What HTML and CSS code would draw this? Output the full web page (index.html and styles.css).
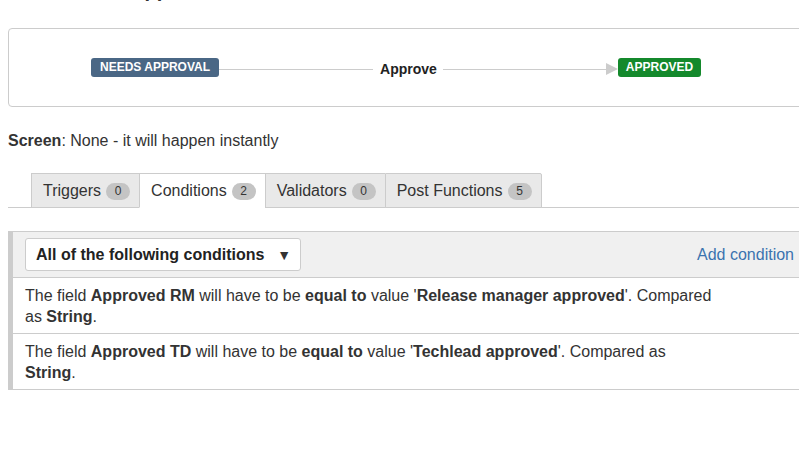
FILE: index.html
```html
<!DOCTYPE html>
<html lang="en">
<head>
  <meta charset="UTF-8">
  <meta name="viewport" content="width=device-width, initial-scale=1.0">
  <title>Transition: Approve</title>
  <link rel="stylesheet" href="styles.css">
</head>
<body>

  <main class="page">
    <h2 class="title">Transition: Approve</h2>

    <section class="diagram">
      <span class="lozenge lozenge-blue">Needs Approval</span>
      <span class="line line-left"></span>
      <span class="step-name">Approve</span>
      <span class="line line-right"></span>
      <span class="arrow"></span>
      <span class="lozenge lozenge-green">Approved</span>
    </section>

    <p class="screen"><b>Screen</b>: None - it will happen instantly</p>

    <nav class="tabs">
      <a class="tab">Triggers <span class="badge">0</span></a>
      <a class="tab active">Conditions <span class="badge">2</span></a>
      <a class="tab">Validators <span class="badge">0</span></a>
      <a class="tab last">Post Functions <span class="badge">5</span></a>
    </nav>

    <section class="conditions">
      <div class="conditions-header">
        <div class="select">
          <span>All of the following conditions</span>
          <span class="caret">&#9660;</span>
        </div>
        <a class="add-link">Add condition</a>
      </div>
      <div class="condition">
        <p>The field <b>Approved RM</b> will have to be <b>equal to</b> value '<b>Release manager approved</b>'. Compared as <b>String</b>.</p>
      </div>
      <div class="condition">
        <p>The field <b>Approved TD</b> will have to be <b>equal to</b> value '<b>Techlead approved</b>'. Compared as <b>String</b>.</p>
      </div>
    </section>
  </main>

</body>
</html>
```

FILE: styles.css
```css
body {
  font-family: "Liberation Sans", Arial, sans-serif;
  color: #333;
  background-color: #fff;
  margin: 0;
  padding: 0;
  overflow: hidden;
}

.page {
  width: 800px;
  padding: 0 8px;
}

.title {
  font-size: 20px;
  line-height: 24px;
  margin: -22px 0 26px;
  padding-left: 15px;
  color: #333;
}

/* workflow diagram */
.diagram {
  display: flex;
  align-items: center;
  height: 77px;
  padding-left: 82px;
  border: 1px solid #ccc;
  border-radius: 4px;
}

.lozenge {
  display: inline-block;
  height: 19px;
  line-height: 19px;
  padding: 0 9px;
  border-radius: 3px;
  color: #fff;
  font-size: 12px;
  font-weight: bold;
  text-transform: uppercase;
}

.lozenge-blue {
  background-color: #4a6785;
}

.lozenge-green {
  padding: 0 8px;
  background-color: #14892c;
}

.line {
  height: 1px;
  background-color: #ccc;
  margin-top: 3px;
}

.line-left {
  width: 154px;
}

.line-right {
  width: 163px;
}

.step-name {
  font-size: 14px;
  font-weight: bold;
  margin: 3px 6px 0 7px;
  color: #222;
}

.arrow {
  width: 0;
  height: 0;
  margin-top: 3px;
  border-top: 6px solid transparent;
  border-bottom: 6px solid transparent;
  border-left: 12px solid #ccc;
}

.screen {
  font-size: 16px;
  line-height: 20px;
  margin: 24px 0 22px;
}

/* tabs */
.tabs {
  display: flex;
  padding-left: 23px;
  border-bottom: 1px solid #ccc;
}

.tab {
  display: flex;
  align-items: center;
  height: 32px;
  padding: 1px 9px 0 11px;
  font-size: 16px;
  color: #333;
  background-color: #e9e9e9;
  border: 1px solid #ccc;
  border-right: none;
  margin-bottom: -1px;
}

.tab.active {
  background-color: #fff;
  border-bottom-color: #fff;
}

.tab.last {
  border-right: 1px solid #ccc;
  border-top-right-radius: 2px;
}

.badge {
  display: inline-block;
  margin-left: 5px;
  min-width: 24px;
  height: 17px;
  line-height: 17px;
  border-radius: 9px;
  background-color: #c4c4c4;
  font-size: 12px;
  text-align: center;
  color: #333;
}

/* conditions panel */
.conditions {
  margin-top: 23px;
  border-left: 5px solid #ccc;
  border-top: 1px solid #ccc;
}

.conditions-header {
  display: flex;
  align-items: center;
  justify-content: space-between;
  height: 45px;
  padding: 0 14px 0 12px;
  background-color: #f0f0f0;
  border-bottom: 1px solid #ccc;
}

.select {
  display: flex;
  align-items: center;
  justify-content: space-between;
  width: 255px;
  height: 31px;
  padding: 0 9px 0 10px;
  background-color: #fff;
  border: 1px solid #ccc;
  border-radius: 3px;
  font-size: 16px;
  font-weight: bold;
  color: #222;
}

.caret {
  font-size: 14px;
  color: #333;
}

.add-link {
  font-size: 16px;
  color: #3b73af;
  cursor: pointer;
}

.condition {
  padding: 7px 12px 6px;
  border-bottom: 1px solid #ccc;
}

.condition p {
  margin: 0;
  max-width: 692px;
  font-size: 16px;
  line-height: 21px;
}
```
